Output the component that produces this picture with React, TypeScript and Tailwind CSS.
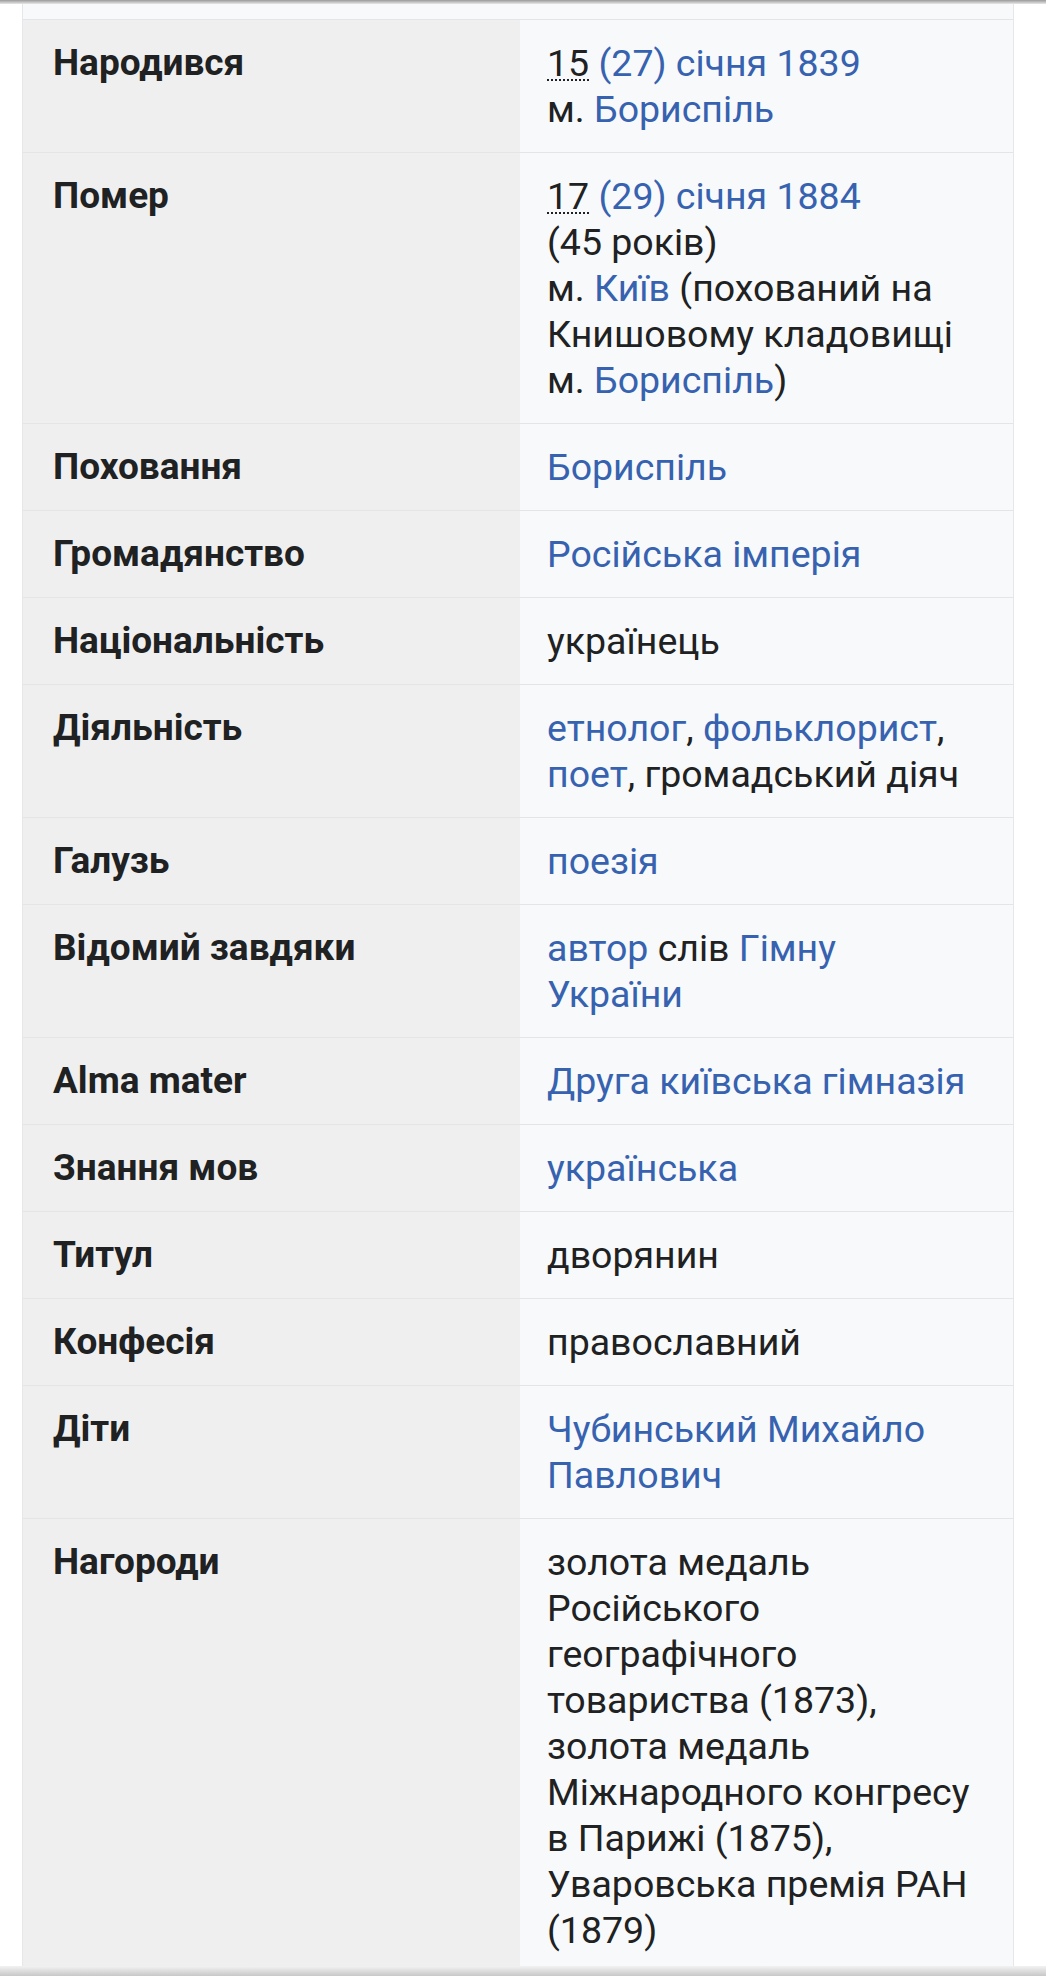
import React from "react";

type Part = { text: string; link?: boolean; abbr?: boolean; br?: boolean };

const L = (text: string): Part => ({ text, link: true });
const T = (text: string): Part => ({ text });
const A = (text: string): Part => ({ text, abbr: true });
const BR: Part = { text: "", br: true };

const rows: { label: string; value: Part[] }[] = [
  { label: "Народився", value: [A("15"), T(" "), L("(27) січня 1839"), BR, T("м. "), L("Бориспіль")] },
  {
    label: "Помер",
    value: [
      A("17"),
      T(" "),
      L("(29) січня 1884"),
      BR,
      T("(45 років)"),
      BR,
      T("м. "),
      L("Київ"),
      T(" (похований на"),
      BR,
      T("Книшовому кладовищі"),
      BR,
      T("м. "),
      L("Бориспіль"),
      T(")"),
    ],
  },
  { label: "Поховання", value: [L("Бориспіль")] },
  { label: "Громадянство", value: [L("Російська імперія")] },
  { label: "Національність", value: [T("українець")] },
  {
    label: "Діяльність",
    value: [L("етнолог"), T(", "), L("фольклорист"), T(","), BR, L("поет"), T(", громадський діяч")],
  },
  { label: "Галузь", value: [L("поезія")] },
  { label: "Відомий завдяки", value: [L("автор"), T(" слів "), L("Гімну"), BR, L("України")] },
  { label: "Alma mater", value: [L("Друга київська гімназія")] },
  { label: "Знання мов", value: [L("українська")] },
  { label: "Титул", value: [T("дворянин")] },
  { label: "Конфесія", value: [T("православний")] },
  { label: "Діти", value: [L("Чубинський Михайло"), BR, L("Павлович")] },
  {
    label: "Нагороди",
    value: [
      T("золота медаль"),
      BR,
      T("Російського"),
      BR,
      T("географічного"),
      BR,
      T("товариства (1873),"),
      BR,
      T("золота медаль"),
      BR,
      T("Міжнародного конгресу"),
      BR,
      T("в Парижі (1875),"),
      BR,
      T("Уваровська премія РАН"),
      BR,
      T("(1879)"),
    ],
  },
];

const Value: React.FC<{ parts: Part[] }> = ({ parts }) => (
  <>
    {parts.map((p, i) => {
      if (p.br) return <br key={i} />;
      if (p.link)
        return (
          <a key={i} href="#" className="text-[#3662b0]">
            {p.text}
          </a>
        );
      if (p.abbr)
        return (
          <abbr
            key={i}
            className="underline decoration-dotted decoration-[2px] underline-offset-[3px] decoration-[#202122]"
          >
            {p.text}
          </abbr>
        );
      return <span key={i}>{p.text}</span>;
    })}
  </>
);

const App: React.FC = () => {
  return (
    <div
      className="w-[1046px] h-[1976px] overflow-hidden bg-white text-[#202122] flex flex-col"
      style={{ fontFamily: "Roboto, 'Noto Sans', sans-serif" }}
    >
      <div className="h-[4px] shrink-0 bg-gradient-to-b from-[#9a9a9a] to-[#e8e8e8]" />
      <div className="flex-1 ml-[22px] w-[992px] border-x border-[#e6e7e9] flex flex-col overflow-hidden">
        <div className="h-[15px] shrink-0 bg-[#f8f9fa]" />
        {rows.map((row, i) => (
          <div key={i} className="flex shrink-0 border-t border-[#e4e5e7] leading-[46px]">
            <div className="w-[497px] shrink-0 bg-[#efefef] pl-[30px] pr-4 py-[20px] text-[37px] font-bold">
              {row.label}
            </div>
            <div className="flex-1 bg-[#f8f9fa] pl-[27px] pr-1 py-[20px] text-[37.5px] whitespace-nowrap">
              <Value parts={row.value} />
            </div>
          </div>
        ))}
      </div>
      <div className="h-[10px] shrink-0 bg-gradient-to-b from-[#f2f2f2] to-[#c8c8c8]" />
    </div>
  );
};

export default App;
